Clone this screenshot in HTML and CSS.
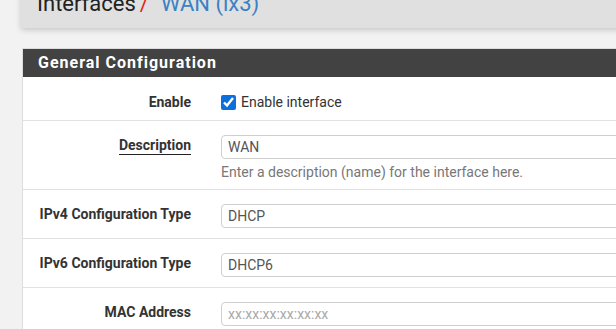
FILE: index.html
```html
<!DOCTYPE html>
<html>
<head>
<meta charset="utf-8">
<link rel="stylesheet" href="styles.css">
</head>
<body>
<div class="page">
  <div class="crumbs">
    <h1 class="crumb-title"><span class="crumb-root">Interfaces</span><span class="crumb-sep">/</span><a class="crumb-link">WAN (lx3)</a></h1>
  </div>

  <div class="panel">
    <div class="panel-heading">
      <h2 class="panel-title">General Configuration</h2>
    </div>
    <div class="panel-body">
      <div class="row row-enable">
        <div class="label">Enable</div>
        <div class="field">
          <label class="check"><input type="checkbox" class="checkbox" checked> Enable interface</label>
        </div>
      </div>
      <div class="row row-desc">
        <div class="label"><span class="label-link">Description</span></div>
        <div class="field">
          <div class="input">WAN</div>
          <div class="help">Enter a description (name) for the interface here.</div>
        </div>
      </div>
      <div class="row">
        <div class="label">IPv4 Configuration Type</div>
        <div class="field"><div class="input">DHCP</div></div>
      </div>
      <div class="row">
        <div class="label">IPv6 Configuration Type</div>
        <div class="field"><div class="input">DHCP6</div></div>
      </div>
      <div class="row">
        <div class="label">MAC Address</div>
        <div class="field"><div class="input placeholder">xx:xx:xx:xx:xx:xx</div></div>
      </div>
    </div>
  </div>
</div>
</body>
</html>
```

FILE: styles.css
```css
html, body {
  margin: 0;
  padding: 0;
  height: 100%;
  overflow: hidden;
}
body {
  background: #f2f2f2;
  font-family: Roboto, "Liberation Sans", sans-serif;
  color: #333;
}
.page {
  padding-left: 21px;
  width: 900px;
}
.crumbs {
  margin-top: -10px;
  height: 38px;
  background: #e0e0e0;
  box-shadow: 0 2px 6px rgba(0,0,0,0.18);
  padding-left: 16px;
}
.crumb-title {
  margin: 0;
  font-size: 22px;
  font-weight: 400;
  line-height: 28px;
  color: #222;
}
.crumb-sep {
  color: #e01f1f;
  margin: 0 12px 0 4px;
}
.crumb-link {
  color: #3a82c4;
}
.panel {
  margin-top: 20px;
  margin-left: 1px;
  border: 1px solid #dcdcdc;
  background: #fff;
}
.panel-heading {
  background: #424242;
  height: 28px;
  padding-left: 15px;
}
.panel-title {
  margin: 0;
  font-size: 16px;
  font-weight: 700;
  letter-spacing: 1px;
  line-height: 28px;
  color: #fff;
}
.row {
  display: flex;
  padding: 14px 0 10px;
  border-bottom: 1px solid #e2e2e2;
}
.row-enable {
  padding: 16px 0 8px;
}
.row-desc {
  padding-bottom: 7px;
}
.label {
  width: 168px;
  flex: none;
  text-align: right;
  font-size: 14px;
  font-weight: 700;
  line-height: 20px;
  color: #333;
}
.row-enable .label {
  line-height: 19px;
}
.label-link {
  border-bottom: 1px solid #222;
  padding-bottom: 1px;
}
.field {
  margin-left: 30px;
  flex: 1;
}
.check {
  display: flex;
  align-items: center;
  font-size: 14px;
  line-height: 19px;
  color: #333;
}
.checkbox {
  width: 15px;
  height: 15px;
  margin: 0 5px 0 0;
  accent-color: #0b6fe0;
}
.input {
  height: 22px;
  border: 1px solid #cfcfcf;
  border-radius: 4px;
  background: #fff;
  padding-left: 6px;
  font-size: 14px;
  line-height: 22px;
  color: #555;
}
.placeholder {
  color: #a8a8a8;
}
.help {
  margin-top: 3px;
  font-size: 14px;
  line-height: 20px;
  color: #777;
}
```
